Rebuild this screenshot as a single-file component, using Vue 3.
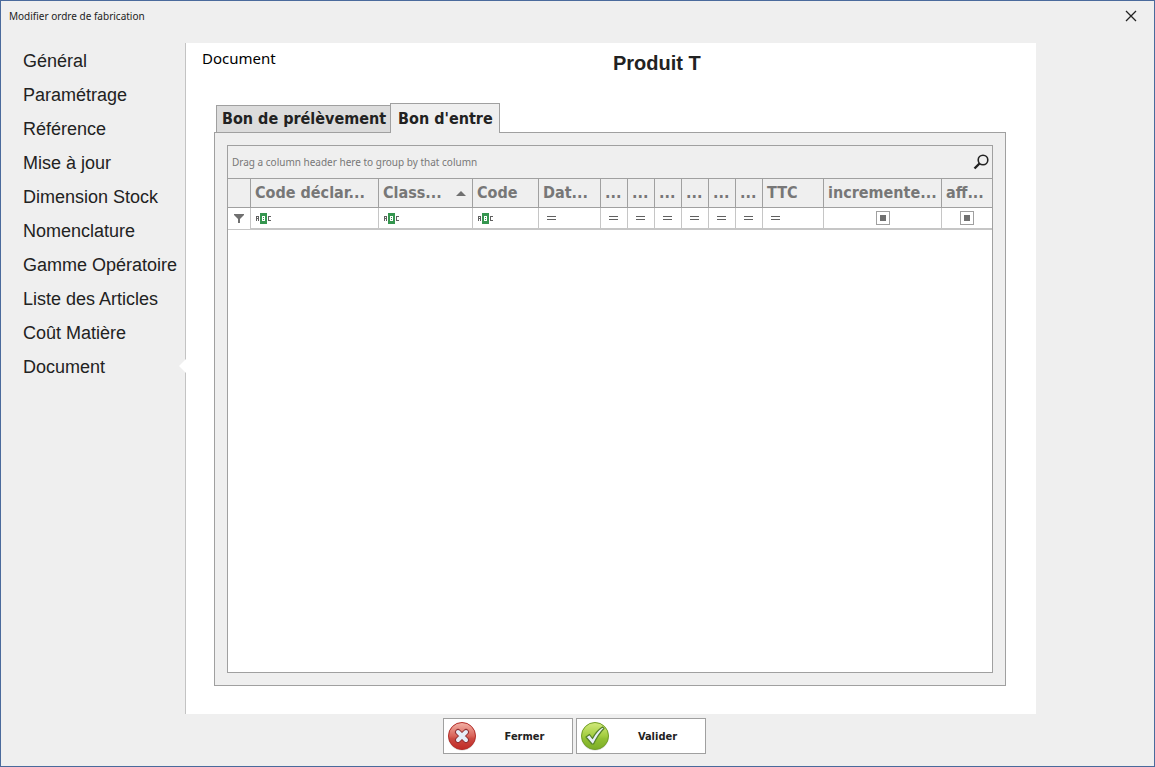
<script setup>
import { ref } from 'vue'

const menu = [
  'Général', 'Paramétrage', 'Référence', 'Mise à jour', 'Dimension Stock',
  'Nomenclature', 'Gamme Opératoire', 'Liste des Articles', 'Coût Matière', 'Document',
]
const current = ref('Document')
const tabs = ['Bon de prélèvement', "Bon d'entre"]
const activeTab = ref("Bon d'entre")

const columns = [
  { label: 'Code déclar...', size: 'c128', type: 'text' },
  { label: 'Class...', size: 'c94', type: 'text', sorted: true },
  { label: 'Code', size: 'c66', type: 'text' },
  { label: 'Dat...', size: 'c62', type: 'equal' },
  { label: '...', size: 'c27', type: 'equal' },
  { label: '...', size: 'c27', type: 'equal' },
  { label: '...', size: 'c27', type: 'equal' },
  { label: '...', size: 'c27', type: 'equal' },
  { label: '...', size: 'c27', type: 'equal' },
  { label: '...', size: 'c27', type: 'equal' },
  { label: 'TTC', size: 'c61', type: 'equal' },
  { label: 'incremente...', size: 'c118', type: 'check' },
  { label: 'aff...', size: 'rest', type: 'check' },
]
</script>

<template>
  <div class="window">
    <header class="titlebar">
      <span class="caption">Modifier ordre de fabrication</span>
      <button class="close" type="button" aria-label="Fermer la fenêtre">
        <svg width="12" height="12" viewBox="0 0 12 12"><path d="M1 1L11 11M11 1L1 11" stroke="#222" stroke-width="1.3" fill="none" /></svg>
      </button>
    </header>

    <div class="body">
      <nav class="sidebar">
        <a
          v-for="item in menu" :key="item" href="#" class="item"
          :class="{ current: item === current }" @click.prevent="current = item"
        >{{ item }}</a>
      </nav>

      <main class="page">
        <div class="heading">
          <span class="section">Document</span>
          <h1>Produit T</h1>
        </div>

        <div class="tabs" role="tablist">
          <button
            v-for="tab in tabs" :key="tab" type="button" role="tab" class="tab"
            :class="{ active: tab === activeTab }" :aria-selected="tab === activeTab"
            @click="activeTab = tab"
          >{{ tab }}</button>
        </div>

        <section class="tabpanel">
          <div class="grid">
            <div class="groupbar">
              <span>Drag a column header here to group by that column</span>
              <button class="search" type="button" aria-label="Rechercher">
                <svg width="16" height="16" viewBox="0 0 16 16" fill="none" stroke="#222">
                  <circle cx="10" cy="6" r="4.800" stroke-width="1.600" />
                  <path d="M6.500 9.500L1.500 14.500" stroke-width="2.400" />
                </svg>
              </button>
            </div>
            <table>
              <colgroup>
                <col class="c23">
                <col v-for="(c, i) in columns" :key="i" :class="c.size">
              </colgroup>
              <thead>
                <tr>
                  <th></th>
                  <th v-for="(c, i) in columns" :key="i" scope="col">
                    <div class="head">
                      <span>{{ c.label }}</span>
                      <svg v-if="c.sorted" width="10" height="5" viewBox="0 0 10 5"><path d="M0 5L5 0L10 5Z" fill="#707070" /></svg>
                    </div>
                  </th>
                </tr>
              </thead>
              <tbody>
                <tr>
                  <td class="mark">
                    <svg width="10" height="9" viewBox="0 0 10 9"><path d="M0 0H10V1L6 5V9H4V5L0 1Z" fill="#707070" /></svg>
                  </td>
                  <td v-for="(c, i) in columns" :key="i">
                    <label v-if="c.type === 'check'" class="tick">
                      <input type="checkbox" :aria-label="'Filtre ' + c.label">
                    </label>
                    <div v-else class="filter">
                      <svg v-if="c.type === 'text'" width="16" height="11" viewBox="0 0 16 11" fill="none" shape-rendering="crispEdges">
                        <rect x="4" width="7" height="11" fill="#35964f" />
                        <path d="M0.5 8V3.5H2.5V8M0.5 5.5H2.5" stroke="#606060" />
                        <path d="M15 3.5H12.5V7.5H15" stroke="#606060" />
                        <path d="M6 3H9V8H6Z" fill="#fff" />
                        <path d="M7 4H8V5H7ZM7 6H8V7H7Z" fill="#35964f" />
                      </svg>
                      <svg v-else width="9" height="4" viewBox="0 0 9 4" shape-rendering="crispEdges"><path d="M0 0H9V1H0ZM0 3H9V4H0Z" fill="#606060" /></svg>
                      <input type="text" :aria-label="'Filtre ' + c.label">
                    </div>
                  </td>
                </tr>
              </tbody>
            </table>
          </div>
        </section>
      </main>
    </div>

    <footer class="actions">
      <button type="button" class="action">
        <svg width="30" height="30" viewBox="0 0 30 30">
          <defs>
            <linearGradient id="red" x1="0" y1="0" x2="0" y2="1">
              <stop offset="0" stop-color="#f3b3a8" /><stop offset=".5" stop-color="#d9645a" />
              <stop offset=".6" stop-color="#cb4a42" /><stop offset="1" stop-color="#c02a26" />
            </linearGradient>
          </defs>
          <circle cx="15" cy="15.5" r="14" fill="#d8d8d8" />
          <circle cx="15" cy="15" r="13.5" fill="url(#red)" stroke="#b52e2a" />
          <path d="M11 11L19 19M19 11L11 19" stroke="#8e2f32" stroke-width="6" stroke-linecap="round" />
          <path d="M11 11L19 19M19 11L11 19" stroke="#e6edf8" stroke-width="4" stroke-linecap="round" />
        </svg>
        <span>Fermer</span>
      </button>
      <button type="button" class="action">
        <svg width="30" height="30" viewBox="0 0 30 30">
          <defs>
            <linearGradient id="green" x1="0" y1="0" x2="0" y2="1">
              <stop offset="0" stop-color="#d2ea7c" /><stop offset=".5" stop-color="#a3cd40" />
              <stop offset=".6" stop-color="#92c033" /><stop offset="1" stop-color="#7cae28" />
            </linearGradient>
          </defs>
          <circle cx="15" cy="15.5" r="14" fill="#d8d8d8" />
          <circle cx="15" cy="15" r="13.5" fill="url(#green)" stroke="#73a026" />
          <path d="M6 16L9.500 13.500L12.500 17.500C15 12.500 18 9 22.500 6L24 7.500C19.500 12 16.500 17 13.500 23H12Z" fill="#e8eff8" stroke="#55802a" stroke-width="1.200" stroke-linejoin="round" />
        </svg>
        <span>Valider</span>
      </button>
    </footer>
  </div>
</template>

<style>
body { margin: 0; }
</style>

<style scoped>
.window {
  box-sizing: border-box;
  min-height: 100vh;
  display: flex;
  flex-direction: column;
  border: 1px solid #4a6a9c;
  background: #efefef;
  color: #222;
  font-family: "Noto Sans", "Open Sans", sans-serif;
}
button { font-family: inherit; color: inherit; cursor: pointer; }
.titlebar {
  height: 42px;
  display: flex;
  justify-content: space-between;
  align-items: flex-start;
  box-sizing: border-box;
  padding: 7px 16px 0 8px;
}
.caption { font-size: 10px; line-height: 16px; }
.close, .search { display: flex; padding: 2px 1px; border: 0; background: none; }
.body { flex: 1; display: flex; margin-right: 118px; }
.sidebar {
  width: 185px;
  box-sizing: border-box;
  border-right: 1px solid #c3c3c3;
  padding-top: 1px;
}
.item {
  position: relative;
  display: block;
  padding-left: 22px;
  line-height: 34px;
  font-family: "Liberation Sans", Arial, sans-serif;
  font-size: 18px;
  color: #222;
  text-decoration: none;
  white-space: nowrap;
}
.item.current::after {
  content: "";
  position: absolute;
  right: -1px;
  top: 9px;
  border: 7px solid transparent;
  border-left-width: 0;
  border-right-color: #fff;
}
.page {
  flex: 1;
  min-width: 0;
  display: flex;
  flex-direction: column;
  background: #fff;
  padding: 0 30px 28px 28px;
}
.heading { display: flex; height: 60px; margin-left: -12px; }
.section { width: 411px; font-size: 15px; line-height: 30px; color: #000; }
h1 {
  margin: 0;
  font: bold 20px/40px "Liberation Sans", Arial, sans-serif;
}
.tabs { display: flex; align-items: flex-end; padding-left: 2px; }
.tab {
  height: 27px;
  padding: 0 4px 0 5px;
  border: 1px solid #a0a0a0;
  border-width: 1px 0 0 1px;
  background: #dcdcdc;
  font-size: 16px;
  line-height: 24px;
  font-weight: bold;
}
.tab, .head, .action { font-family: Tahoma, "DejaVu Sans Condensed", sans-serif; }
.tab.active {
  position: relative;
  height: 30px;
  margin-bottom: -1px;
  padding: 0 6px 0 7px;
  border-width: 1px 1px 0;
  background: #efefef;
}
.tabpanel {
  flex: 1;
  display: flex;
  border: 1px solid #a0a0a0;
  background: #efefef;
  padding: 12px;
}
.grid { flex: 1; min-width: 0; border: 1px solid #a0a0a0; background: #fff; }
.groupbar {
  height: 32px;
  display: flex;
  justify-content: space-between;
  align-items: center;
  padding: 0 2px 0 4px;
  border-bottom: 1px solid #a0a0a0;
  background: #efefef;
  color: #777;
  font-size: 10px;
}
table { width: 100%; table-layout: fixed; border-collapse: separate; border-spacing: 0; }
.c23 { width: 23px; }
.c27 { width: 27px; }
.c61 { width: 61px; }
.c62 { width: 62px; }
.c66 { width: 66px; }
.c94 { width: 94px; }
.c118 { width: 118px; }
.c128 { width: 128px; }
th, td { padding: 0; box-sizing: border-box; border-right: 1px solid #c6c6c6; }
th { height: 29px; border-right-color: #a0a0a0; border-bottom: 1px solid #a0a0a0; background: #efefef; }
td { height: 22px; border-bottom: 2px solid #c6c6c6; }
th:last-child, td:last-child { border-right: 0; }
.head {
  display: flex;
  align-items: center;
  justify-content: space-between;
  padding: 0 6px 0 4px;
  color: #777;
  font-size: 16px;
  line-height: 28px;
  white-space: nowrap;
}
.head span { flex: none; }
.mark { text-align: center; line-height: 0; border-bottom-width: 1px; }
.filter { display: flex; align-items: center; height: 20px; padding-left: 8px; }
.filter svg { flex: none; }
.filter svg[width="16"] { margin-left: -3px; }
.filter input { flex: 1; width: 0; min-width: 0; padding: 0; border: 0; outline: 0; background: none; }
.tick { display: flex; justify-content: center; }
.tick input {
  appearance: none;
  width: 14px;
  height: 14px;
  margin: 0;
  border: 1px solid #a0a0a0;
  background: linear-gradient(#707070, #707070) center / 6px 6px no-repeat #fff;
}
.actions { display: flex; justify-content: center; gap: 3px; padding: 4px 6px 12px 0; }
.action {
  width: 130px;
  height: 36px;
  box-sizing: border-box;
  display: flex;
  align-items: center;
  padding: 0 0 0 3px;
  border: 1px solid #a0a0a0;
  background: #fff;
  font-size: 11px;
  font-weight: bold;
}
.action span { flex: 1; text-align: center; }
</style>
